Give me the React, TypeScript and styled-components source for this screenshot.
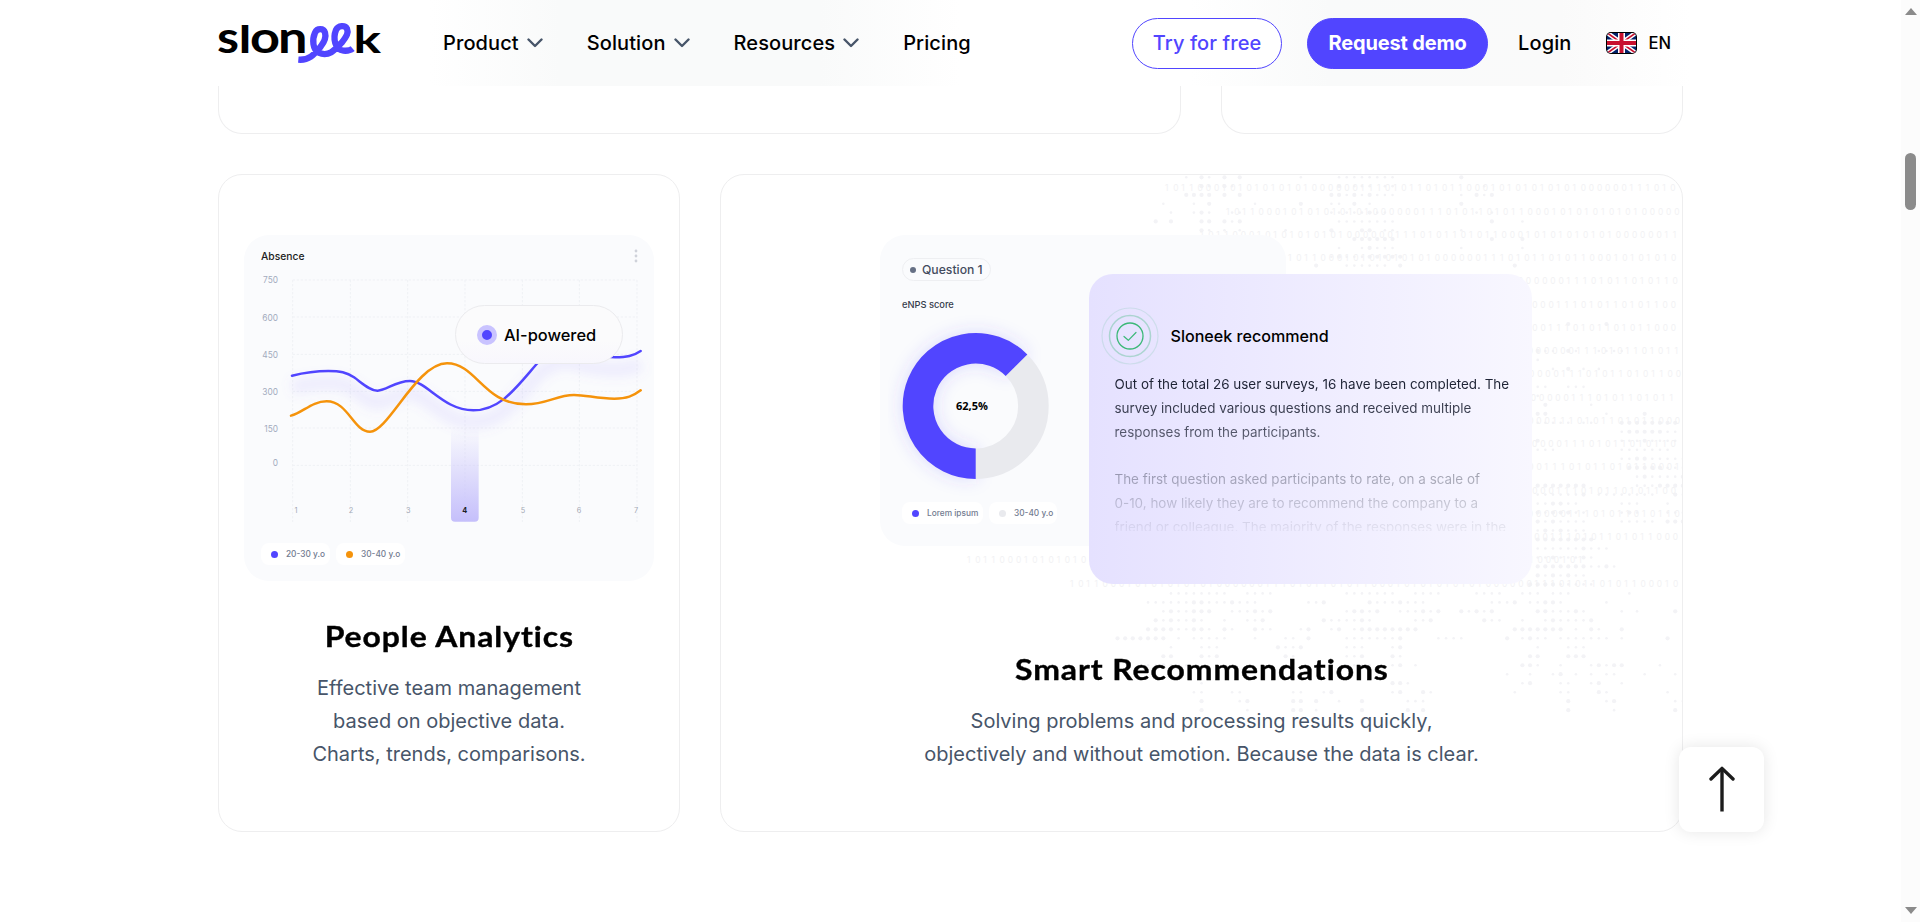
import React from "react";
import styled, { createGlobalStyle } from "styled-components";

const GlobalStyle = createGlobalStyle`
  * {
    box-sizing: border-box;
  }
  body {
    margin: 0;
    background: #ffffff;
    color: #000000;
    font-family: Inter, "Liberation Sans", sans-serif;
    overflow: hidden;
  }
`;

const Page = styled.div`
  display: flex;
  height: 922px;
  overflow: hidden;
`;

const Content = styled.div`
  flex: 1;
  position: relative;
`;

const Header = styled.header`
  display: flex;
  align-items: center;
  height: 86px;
  padding: 0 218px;
  background:
    linear-gradient(90deg, transparent 430px, #f9fafa 560px, #f9fafa 820px, transparent 960px),
    linear-gradient(90deg, transparent 1190px, #f9fafa 1330px, #fafafa 1560px, transparent 1690px);
`;

const Logo = styled.svg`
  width: 164px;
  height: 46px;
  margin-top: -1px;
  flex: none;
  overflow: visible;
`;

const Nav = styled.nav`
  display: flex;
  align-items: center;
  gap: 44px;
  margin-left: 61px;
`;

const NavItem = styled.a`
  display: flex;
  align-items: center;
  gap: 8px;
  font-size: 20px;
  font-weight: 500;
  line-height: 28px;
  letter-spacing: 0.1px;
`;

const Actions = styled.div`
  display: flex;
  align-items: center;
  margin-left: auto;
  margin-right: 12px;
`;

const PillButton = styled.button<{ $filled?: boolean }>`
  width: ${(props) => (props.$filled ? "181px" : "150px")};
  height: 51px;
  margin-right: ${(props) => (props.$filled ? "30px" : "25px")};
  padding: 0;
  border: 1px solid #5145ff;
  border-radius: 26px;
  background: ${(props) => (props.$filled ? "#5145ff" : "#ffffff")};
  color: ${(props) => (props.$filled ? "#ffffff" : "#5145ff")};
  font-family: inherit;
  font-size: 20px;
  font-weight: ${(props) => (props.$filled ? 700 : 500)};
  letter-spacing: ${(props) => (props.$filled ? "-0.15px" : "0.1px")};
  white-space: nowrap;
`;

const Flag = styled.svg`
  width: 31px;
  height: 22px;
  margin: 0 11px 0 35px;
`;

const Language = styled.span`
  font-size: 16.6px;
  font-weight: 500;
`;

const CardRow = styled.div<{ $wideFirst?: boolean }>`
  display: grid;
  grid-template-columns: ${(props) =>
    props.$wideFirst ? "963px 462px" : "462px 963px"};
  gap: 40px;
  padding: 0 218px;
`;

const CutCard = styled.div`
  height: 48px;
  margin-bottom: 40px;
  border: 1px solid #eeeeef;
  border-top: 0;
  border-radius: 0 0 24px 24px;
`;

const Card = styled.article`
  position: relative;
  display: flex;
  flex-direction: column;
  align-items: center;
  height: 658px;
  padding-top: 60px;
  border: 1px solid #eeeeef;
  border-radius: 24px;
  overflow: hidden;
`;

const Title = styled.h3<{ $top: number }>`
  margin: ${(props) => props.$top}px 0 0;
  font-family: Lato, "Liberation Sans", sans-serif;
  font-size: 28px;
  font-weight: 700;
  line-height: 36px;
  letter-spacing: 0.8px;
  transform: scaleX(1.14);
  -webkit-text-stroke: 0.35px #000000;
`;

const Description = styled.p`
  position: relative;
  margin: 18px 0 0;
  font-size: 20px;
  line-height: 33px;
  text-align: center;
  color: #475569;
`;

const Panel = styled.div<{ $width: number; $height: number }>`
  position: relative;
  width: ${(props) => props.$width}px;
  height: ${(props) => props.$height}px;
  border-radius: 25px;
  background: #fafbfd;
`;

const PanelHeader = styled.div`
  display: flex;
  justify-content: space-between;
  align-items: flex-start;
  height: 35px;
  padding: 14px 16px 0 17px;
  font-size: 10.3px;
  font-weight: 500;
  line-height: 15px;
  color: #1c1d22;
`;

const Chart = styled.svg`
  display: block;
  width: 410px;
  height: 257px;
`;

const Legend = styled.div<{ $left: number; $top: number }>`
  display: flex;
  gap: 6px;
  margin: ${(props) => props.$top}px 0 0 ${(props) => props.$left}px;
`;

const LegendItem = styled.div<{ $width: number }>`
  display: flex;
  align-items: center;
  gap: 8px;
  width: ${(props) => props.$width}px;
  height: 22px;
  padding-left: 10px;
  border-radius: 8px;
  background: #ffffff;
  color: #727b90;
  font-size: 8.3px;
  font-weight: 500;
  white-space: nowrap;
`;

const Dot = styled.span<{ $color: string; $size?: number }>`
  flex: none;
  width: ${(props) => props.$size || 7}px;
  height: ${(props) => props.$size || 7}px;
  border-radius: 50%;
  background: ${(props) => props.$color};
`;

const AiBadge = styled.div`
  position: absolute;
  left: 211px;
  top: 70px;
  display: flex;
  align-items: center;
  gap: 7px;
  width: 168px;
  height: 59px;
  padding-left: 21px;
  border: 1px solid #ebebee;
  border-radius: 30px;
  background: linear-gradient(180deg, #fbfbfc 60%, #f8f7fd);
  font-size: 16.4px;
  font-weight: 500;
  white-space: nowrap;
`;

const AiDot = styled.span`
  width: 20px;
  height: 20px;
  border: 5px solid #c9c3ff;
  border-radius: 50%;
  background: #5145ff;
`;

const WorldMap = styled.svg`
  position: absolute;
  left: 0;
  top: 0;
  width: 961px;
  height: 656px;
`;

const Illustration = styled.div`
  position: relative;
  width: 652px;
  height: 350px;
  margin-left: 8px;
`;

const QuestionBadge = styled.div`
  display: flex;
  align-items: center;
  gap: 6px;
  width: 89px;
  height: 23px;
  padding-left: 7px;
  border: 1px solid #eeeff2;
  border-radius: 12px;
  color: #434b5e;
  font-size: 12.2px;
  font-weight: 500;
  white-space: nowrap;
`;

const Survey = styled.div`
  padding: 23px 0 0 22.5px;
`;

const SurveyLabel = styled.div`
  margin-top: 17px;
  font-size: 9.3px;
  font-weight: 500;
  line-height: 13px;
  color: #363b4b;
`;

const Donut = styled.svg`
  display: block;
  width: 196px;
  height: 190px;
  margin: -0.5px 0 0 -24.5px;
`;

const Recommendation = styled.div`
  position: absolute;
  left: 209px;
  top: 39px;
  width: 443px;
  height: 310px;
  padding: 33px 0 0 12px;
  border-radius: 24px;
  background: linear-gradient(90deg, #e5e1ff, #f8f7ff);
`;

const RecommendationHead = styled.div`
  display: flex;
  align-items: center;
  gap: 12px;
  height: 58px;
  font-size: 16.1px;
  font-weight: 500;
`;

const RecommendationText = styled.p`
  height: 158px;
  margin: 8px 0 0 14px;
  overflow: hidden;
  font-size: 13.45px;
  line-height: 23.8px;
  white-space: pre;
  color: #1e2335;
  mask-image: linear-gradient(180deg, #000 14px, rgba(0, 0, 0, 0.72) 62px, rgba(0, 0, 0, 0.36) 105px, rgba(0, 0, 0, 0.06) 158px);
`;

const BackToTop = styled.button`
  position: absolute;
  left: 1679px;
  top: 747px;
  display: flex;
  align-items: center;
  justify-content: center;
  width: 85px;
  height: 85px;
  padding: 0 0 2px;
  border: 0;
  border-radius: 12px;
  background: #ffffff;
  box-shadow: 0 0 16px rgba(0, 0, 0, 0.1);
`;

const ScrollTrack = styled.div`
  display: flex;
  flex-direction: column;
  align-items: center;
  width: 19px;
  padding: 8px 0;
  background: #fcfcfc;
`;

const ScrollArrow = styled.span<{ $down?: boolean }>`
  border: solid transparent;
  border-width: ${(props) => (props.$down ? "7px 6.5px 0" : "0 6.5px 7px")};
  border-color: #8b8b8b transparent;
  margin-top: ${(props) => (props.$down ? "auto" : "0")};
`;

const ScrollThumb = styled.span`
  width: 11px;
  height: 57px;
  margin-top: 138px;
  border-radius: 6px;
  background: #8b8b8b;
`;

const Chevron = () => (
  <svg width="16" height="10" viewBox="0 0 16 10" fill="none" stroke="#475569" strokeWidth="2.4" strokeLinecap="round" strokeLinejoin="round">
    <path d="M1.5 1.5 L8 8 L14.5 1.5" />
  </svg>
);

const SloneekLogo = () => (
  <Logo viewBox="0 0 164 46" fontFamily="Lato" fontWeight="700">
    <text x="-1" y="32.5" fontSize="43" textLength="22" lengthAdjust="spacingAndGlyphs">s</text>
    <text x="20.5" y="32.5" fontSize="38" textLength="13" lengthAdjust="spacingAndGlyphs">l</text>
    <text x="32" y="32.5" fontSize="43" textLength="30" lengthAdjust="spacingAndGlyphs">o</text>
    <text x="60" y="32.5" fontSize="43" textLength="29.5" lengthAdjust="spacingAndGlyphs">n</text>
    <text x="135.5" y="32.5" fontSize="38" textLength="27.5" lengthAdjust="spacingAndGlyphs">k</text>
    <path
      transform="translate(-18 -20) scale(0.33333)"
      d="M295 179 C330 182 345 160 362 140 C376 122 378 108 375 98 C371 84 351 84 345 98 C336 118 338 150 356 158 C385 172 405 150 425 128 C441 108 446 98 441 86 C435 75 415 76 408 90 C398 115 405 150 430 152 C442 153 452 151 458 146"
      fill="none"
      stroke="#5145ff"
      strokeWidth="19"
    />
  </Logo>
);

const UkFlag = () => (
  <Flag viewBox="0 0 31 22">
    <defs>
      <clipPath id="flag">
        <rect x="1" y="1" width="29" height="20" rx="4" />
      </clipPath>
    </defs>
    <rect width="31" height="22" rx="5" fill="#000" />
    <g clipPath="url(#flag)">
      <rect width="31" height="22" fill="#012169" />
      <path d="M0 0 L31 22 M31 0 L0 22" stroke="#fff" strokeWidth="4.6" />
      <path d="M0 0 L31 22 M31 0 L0 22" stroke="#c8102e" strokeWidth="1.6" />
      <path d="M15.5 0 V22 M0 11 H31" stroke="#fff" strokeWidth="7" />
      <path d="M15.5 0 V22 M0 11 H31" stroke="#c8102e" strokeWidth="4" />
    </g>
  </Flag>
);

const yLabels = [
  { label: "750", y: 340 },
  { label: "600", y: 454 },
  { label: "450", y: 564 },
  { label: "300", y: 676 },
  { label: "150", y: 786 },
  { label: "0", y: 888 },
];
const gridX = [248, 421, 593, 765, 937, 1108, 1281];
const labelX = [258, 423, 595, 764, 939, 1107, 1278];
const gridY = [330, 441, 553, 664, 774, 886];

const purpleLine =
  "M246 617 C290 606 330 603 355 603 C390 603 410 607 432 622 C455 638 480 663 503 662 C530 662 555 633 600 633 C650 633 700 721 790 721 C870 721 915 657 980 582 C1010 550 1050 530 1100 545 C1150 560 1180 562 1215 562 C1250 562 1270 558 1292 543";
const orangeLine =
  "M243 737 C280 727 305 694 350 694 C415 694 430 785 480 785 C535 785 620 580 711 580 C800 580 820 703 948 703 C1010 703 1040 675 1092 675 C1130 675 1160 686 1213 686 C1250 686 1270 678 1292 661";

const AbsenceChart = () => (
  <Chart viewBox="102 300 1230 771">
    <defs>
      <linearGradient id="bar" x1="0" y1="0" x2="0" y2="1">
        <stop offset="0" stopColor="#c5bffb" stopOpacity="0" />
        <stop offset="1" stopColor="#c5bffb" />
      </linearGradient>
      <filter id="soft" x="-10%" y="-60%" width="120%" height="260%">
        <feGaussianBlur stdDeviation="16" />
      </filter>
    </defs>
    <g stroke="#eff1f5" strokeWidth="3" strokeDasharray="7 5">
      {gridX.map((x) => (
        <path key={x} d={`M${x} 330 V1056`} />
      ))}
      {gridY.map((y) => (
        <path key={y} d={`M248 ${y} H1281`} />
      ))}
    </g>
    <path d={purpleLine} transform="translate(0 36)" fill="none" stroke="#8a74ff" strokeOpacity="0.11" strokeWidth="44" filter="url(#soft)" />
    <path d="M723 770 H806 V1043 Q806 1055 794 1055 H735 Q723 1055 723 1043 Z" fill="url(#bar)" />
    <path d={purpleLine} fill="none" stroke="#5145ff" strokeWidth="7.5" strokeLinecap="round" />
    <path d={orangeLine} fill="none" stroke="#f5930b" strokeWidth="7.5" strokeLinecap="round" />
    <g fill="#a3abbd" fontSize="25" textAnchor="end">
      {yLabels.map(({ label, y }) => (
        <text key={label} x="204" y={y}>{label}</text>
      ))}
    </g>
    <g fill="#a3a8b4" fontSize="22" textAnchor="middle">
      {labelX.map((x, index) => (
        <text key={x} x={x} y="1030" fill={index === 3 ? "#1c1d22" : undefined} fontWeight={index === 3 ? 700 : 400}>
          {index + 1}
        </text>
      ))}
    </g>
  </Chart>
);

const BITS = "1011000101010101010000001110101101011000101010101010000001110101101011000101";
const bitStarts = [444, 505, 479, 567, 650, 640, 632, 660, 645, 655, 636, 648, 628, 640, 652, 634, 246, 349];

// column lists per row, an "o" marks a large dot or a run of them
const topDots = [
  "9 o11 12 o14 o16 24 29-36 o45",
  "o11 12 o14 15 o29 31-33 35 36 48",
  "o9-12 o14 o16 o28 o29 30 o31 32 o33 34-36 45 o47 48 o49",
  "6 10 o12 18 o24 28 29 o31 33 o45",
  "7 10 o11 12 15 16 28-32 o33 34 35 47 49",
  "o5 o7 o11 o12 o14 15 o16 29-36 o49 53",
  "o11 12 14 16 22 o28 o32 o33 35 36 45",
  "o31-36 o49 o53",
  "29 32 o33 34-36 45 53",
  "28 o29 30-32 o33-37",
  "o26 30-35 o37 o52",
];
const lowerDots = [
  "o59 o64",
  "",
  "",
  "o55 56 57 o59 60 63-66",
  "55",
  "57 o59 61 63",
  "",
  "54-56 59-61",
  "55",
  "o56 62",
  "o55 o56 64 o69",
  "55-59 61 62 o66-73",
  "66 o67-71 72 73",
  "o55 66-68 o69 70-73",
  "55 56 57 66-72",
  "66 67 o68 o69 70-74",
  "o67-71 72-74",
  "68 o69 70-73 o74",
  "o55-61 68-70 o71-74",
  "55-60 o61 63-70 o73 74",
  "55 56 o57 o58 59 60 66-68 72",
  "o55 56 o57-59 60 61 66 o67 68 72-74",
  "o55 56 o57 58-61 66-70 o72-74",
  "55 o56 57 o58 59-61",
  "o55-62",
  "55-60 o61 62-64",
  "55 56 o57 58-60 o61 62",
  "o55-61 62 63 o64 65",
  "o55 56 o57 58 o59 60 61",
  "o54-57 58-62",
  "7-14 17-20 30-36 39-42 47-50 53-55 57-59 67",
  "4-9 o10 o11 12-14 o15 16-18 25 26 o27 o33 34-36 o37 38-40 49-51 o52 54 55 o56 o57 58 64",
  "6 o7 8 9 o10-12 15-17 o18 19 o20 30 o31 o32 33 o34 37-39 o40 41 o42 o45 46 o47 48 o49 o55 o56 57-59 o60 61 66 68 o73",
  "o5 6 o7 8 9 o10 11 14 17 18 o19 o27 28-31 o32 33 39 40 o41 o48 49 50 53 56 o57 58 59 60 61 o62",
  "o4-7 8 9 o10 o11 12 o14 15 o18 19 20 24 o25 28 o29 31 o32-39 o52-58 60 o62 63 o66",
  "o0-6 8 10-14 18 22 23 o25 30-36 o37 42-45 o51 53 o54 55 56 58-64 66 o72",
  "7 11-13 o21 22 23 o24 30-32 36 o37 55 59-61",
  "o6 o7 o11 12 o13 o22 23 30 31 o32 o36 37 o54 o55 o59-61",
  "4 5 o6 7-9 30-33 36 o37 39 o53 o54 55 58 62 o63 64 o65 o66 71",
  "51 54 57 o58 60 62 64 65 69 73",
  "11 o36 o37 38 53 o54 58 59 62 o63 66",
  "10 11 15 16 23 24 27 o28 36 o37 o40 41 52 58 59 o63 64 72",
  "o11 16 o17 o23 o24 o26 29 o32 38-40 o59 64 o65 73 74",
  "o11 17 o23 o24 26 o32 o38 o40 o59 65 o73",
];

const renderDots = (rows: string[], top: number, pitch: number) =>
  rows.flatMap((row, rowIndex) =>
    row.split(" ").filter(Boolean).flatMap((token) => {
      const large = token.startsWith("o");
      const [from, to = from] = token.replace("o", "").split("-").map(Number);
      return Array.from({ length: to - from + 1 }, (_, i) => (
        <circle
          key={`${rowIndex}-${from + i}`}
          cx={396.5 + (from + i) * 7.64}
          cy={top + rowIndex * pitch}
          r={large ? 2.1 : 1.3}
        />
      ));
    })
  );

const MapBackdrop = () => (
  <WorldMap viewBox="0 0 961 656">
    <g fill="#f3f3f6">
      {renderDots(topDots, 2.3, 8.83)}
      {renderDots(lowerDots, 149, 8.98)}
    </g>
    <g fill="#f2f2f4" fontSize="8.4" fontFamily="Inter">
      {bitStarts.map((start, row) => (
        <text key={row} y={16.4 + row * 23.25}>
          {BITS.split("").map((bit, i) => {
            const x = start + i * 8.15;
            return x < 956 ? <tspan key={i} x={x}>{bit}</tspan> : null;
          })}
        </text>
      ))}
    </g>
  </WorldMap>
);

const ScoreDonut = () => (
  <Donut viewBox="0 0 196 190">
    <defs>
      <filter id="glow" x="-30%" y="-30%" width="160%" height="160%">
        <feGaussianBlur stdDeviation="9" />
      </filter>
    </defs>
    <path d="M97.7 152.7 A57.7 57.7 0 1 1 138.5 54.2" fill="none" stroke="#5145ff" strokeOpacity="0.2" strokeWidth="30" filter="url(#glow)" />
    <circle cx="97.7" cy="95" r="57.7" fill="none" stroke="#e9eaee" strokeWidth="30.6" />
    <path d="M97.7 152.7 A57.7 57.7 0 1 1 138.5 54.2" fill="none" stroke="#5145ff" strokeWidth="30.6" />
    <text x="94" y="98.7" textAnchor="middle" fontFamily="Open Sans" fontWeight="700" fontSize="11">
      62,5%
    </text>
  </Donut>
);

const CheckRings = () => (
  <svg width="58" height="58" viewBox="0 0 58 58" fill="none" stroke="#3cb878">
    <circle cx="29" cy="29" r="13" strokeWidth="1.3" />
    <circle cx="29" cy="29" r="20.5" strokeWidth="1.5" strokeOpacity="0.35" />
    <circle cx="29" cy="29" r="28" strokeWidth="1.2" strokeOpacity="0.15" />
    <path d="M23 29.5 L27.3 33.3 L35 25.5" strokeWidth="1.2" strokeLinecap="round" strokeLinejoin="round" />
  </svg>
);

const surveyText = `Out of the total 26 user surveys, 16 have been completed. The
survey included various questions and received multiple
responses from the participants.

The first question asked participants to rate, on a scale of
0-10, how likely they are to recommend the company to a
friend or colleague. The majority of the responses were in the`;

const App: React.FC = () => {
  return (
    <>
      <GlobalStyle />
      <Page>
        <Content>
          <Header>
            <SloneekLogo />
            <Nav>
              <NavItem>Product <Chevron /></NavItem>
              <NavItem>Solution <Chevron /></NavItem>
              <NavItem>Resources <Chevron /></NavItem>
              <NavItem>Pricing</NavItem>
            </Nav>
            <Actions>
              <PillButton>Try for free</PillButton>
              <PillButton $filled>Request demo</PillButton>
              <NavItem>Login</NavItem>
              <UkFlag />
              <Language>EN</Language>
            </Actions>
          </Header>
          <CardRow $wideFirst>
            <CutCard />
            <CutCard />
          </CardRow>
          <CardRow>
            <Card>
              <Panel $width={410} $height={346}>
                <PanelHeader>
                  Absence
                  <svg width="4" height="14" viewBox="0 0 4 14" fill="#cfd2da">
                    <circle cx="2" cy="2" r="1.4" />
                    <circle cx="2" cy="7" r="1.4" />
                    <circle cx="2" cy="12" r="1.4" />
                  </svg>
                </PanelHeader>
                <AbsenceChart />
                <Legend $left={17} $top={16}>
                  <LegendItem $width={69}><Dot $color="#5145ff" />20-30 y.o</LegendItem>
                  <LegendItem $width={69}><Dot $color="#f5930b" />30-40 y.o</LegendItem>
                </Legend>
                <AiBadge>
                  <AiDot />
                  AI-powered
                </AiBadge>
              </Panel>
              <Title $top={37}>People Analytics</Title>
              <Description>
                Effective team management
                <br />
                based on objective data.
                <br />
                Charts, trends, comparisons.
              </Description>
            </Card>
            <Card>
              <MapBackdrop />
              <Illustration>
                <Panel $width={406} $height={311}>
                  <Survey>
                    <QuestionBadge><Dot $color="#667085" $size={6} />Question 1</QuestionBadge>
                    <SurveyLabel>eNPS score</SurveyLabel>
                    <ScoreDonut />
                    <Legend $left={0} $top={1.5}>
                      <LegendItem $width={81}><Dot $color="#5145ff" />Lorem ipsum</LegendItem>
                      <LegendItem $width={68}><Dot $color="#e9eaee" />30-40 y.o</LegendItem>
                    </Legend>
                  </Survey>
                </Panel>
                <Recommendation>
                  <RecommendationHead>
                    <CheckRings />
                    Sloneek recommend
                  </RecommendationHead>
                  <RecommendationText>{surveyText}</RecommendationText>
                </Recommendation>
              </Illustration>
              <Title $top={66}>Smart Recommendations</Title>
              <Description>
                Solving problems and processing results quickly,
                <br />
                objectively and without emotion. Because the data is clear.
              </Description>
            </Card>
          </CardRow>
          <BackToTop>
            <svg width="26" height="46" viewBox="0 0 26 46" fill="none" stroke="#1c1c1c" strokeWidth="3.4">
              <path d="M13 2 V45.5" />
              <path d="M2 13 L13 2.4 L24 13" strokeLinecap="round" strokeLinejoin="round" />
            </svg>
          </BackToTop>
        </Content>
        <ScrollTrack>
          <ScrollArrow />
          <ScrollThumb />
          <ScrollArrow $down />
        </ScrollTrack>
      </Page>
    </>
  );
};

export default App;
